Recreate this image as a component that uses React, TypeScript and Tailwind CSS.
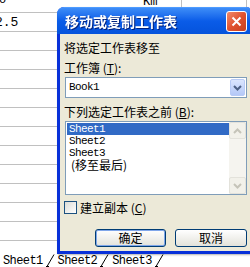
import React from 'react';

const cjk = { fontFamily: '"Noto Sans CJK SC", "Liberation Sans", sans-serif' };
const mono = { fontFamily: '"Liberation Mono", "Noto Sans CJK SC", monospace' };

// spreadsheet rows behind the dialog
function SheetGrid() {
  const rows = Array.from({ length: 12 });
  return (
    <div className="flex flex-col h-[255px] overflow-hidden">
      <div className="grid grid-cols-[182px_65px_1fr] h-[13px] border-b border-[#c0c0c0] overflow-hidden">
        <div className="border-r border-[#c0c0c0] relative overflow-hidden">
          <span className="absolute left-[-1px] top-[-6px] text-[12px] leading-[12px]" style={mono}>o</span>
          <span className="absolute left-[143px] top-[-4px] text-[12px] leading-[12px]" style={mono}>Km</span>
        </div>
        <div className="border-r border-[#c0c0c0]" />
        <div />
      </div>
      {rows.map((_, i) => (
        <div key={i} className="grid grid-cols-[182px_65px_1fr] h-[19px] shrink-0 border-b border-[#c0c0c0]">
          <div className="border-r border-[#c0c0c0] overflow-hidden">
            {i === 0 && (
              <span className="block ml-[-5px] mt-[3px] text-[13px] leading-[14px]" style={mono}>2.5</span>
            )}
          </div>
          <div className="border-r border-[#c0c0c0]" />
          <div />
        </div>
      ))}
    </div>
  );
}

function TabSlash() {
  return (
    <svg width="9" height="13" viewBox="0 0 9 13" className="shrink-0">
      <line x1="1" y1="12.5" x2="8" y2="0.5" stroke="#000" strokeWidth="1" />
      <line x1="0" y1="12.5" x2="3" y2="12.5" stroke="#000" strokeWidth="1" />
    </svg>
  );
}

function SheetTabs() {
  return (
    <div className="flex items-end h-[12px] pl-[3px] gap-[3px] text-[12px] leading-[12px] tracking-[-0.6px]" style={mono}>
      <span>Sheet1</span>
      <TabSlash />
      <span>Sheet2</span>
      <TabSlash />
      <span>Sheet3</span>
      <TabSlash />
    </div>
  );
}

function Chevron({ up, color }: { up?: boolean; color: string }) {
  return (
    <svg width="9" height="6" viewBox="0 0 9 6">
      <path d={up ? 'M1 5 L4.5 1.5 L8 5' : 'M1 1 L4.5 4.5 L8 1'} fill="none" stroke={color} strokeWidth="2" />
    </svg>
  );
}

function Label({ text, k }: { text: string; k: string }) {
  return (
    <div className="h-[12px] leading-[12px] text-[12px] pl-[4px] whitespace-nowrap" style={cjk}>
      {text} (<span className="underline">{k}</span>):
    </div>
  );
}

function Dialog() {
  return (
    <div className="absolute left-[57px] top-[7px] w-[196px] h-[247px] rounded-t-[7px] bg-[#0831d9] flex flex-col pb-[3px] px-[3px] shadow-[1px_1px_2px_rgba(0,0,0,0.3)]">
      {/* title bar */}
      <div className="h-[27px] -mx-[3px] rounded-t-[7px] bg-gradient-to-b from-[#3d8cf7] via-[#0a5ce8] to-[#0553dc] flex items-center pl-[8px] pr-[6px] border-t border-[#4d9bff]">
        <span className="text-white font-bold text-[14px] leading-[14px] whitespace-nowrap drop-shadow-[1px_1px_0_rgba(0,0,60,0.6)]" style={cjk}>
          移动或复制工作表
        </span>
        <div className="ml-auto w-[21px] h-[21px] rounded-[3px] border border-white bg-gradient-to-br from-[#f08a6a] via-[#e0522f] to-[#c8401f] flex items-center justify-center">
          <svg width="11" height="11" viewBox="0 0 11 11">
            <path d="M1.5 1.5 L9.5 9.5 M9.5 1.5 L1.5 9.5" stroke="#fff" strokeWidth="2" />
          </svg>
        </div>
      </div>

      {/* body */}
      <div className="flex-1 bg-[#ece9d8] flex flex-col pt-[8px] pr-[3px] text-black">
        <div className="h-[12px] leading-[12px] text-[12px] pl-[4px]" style={cjk}>将选定工作表移至</div>
        <div className="mt-[8px]">
          <Label text="工作簿" k="T" />
        </div>
        <div className="mt-[3px] ml-[5px] h-[21px] border border-[#7f9db9] bg-white flex items-center">
          <span className="pl-[3px] text-[11px] tracking-[-0.6px]" style={mono}>Book1</span>
          <div className="ml-auto mr-[1px] w-[15px] h-[17px] rounded-[2px] border border-[#b8cbf6] bg-gradient-to-b from-[#dbe6fe] to-[#b4c8f7] flex items-center justify-center">
            <Chevron color="#4d6185" />
          </div>
        </div>
        <div className="mt-[8px]">
          <Label text="下列选定工作表之前" k="B" />
        </div>
        <div className="mt-[3px] ml-[5px] h-[74px] border border-[#7f9db9] bg-white flex">
          <div className="flex-1 flex flex-col pt-[1px] pl-[1px] text-[11px] leading-[12px] tracking-[-0.6px]" style={mono}>
            <div className="h-[12px] bg-[#316ac5] text-white pl-[2px]">Sheet1</div>
            <div className="h-[12px] pl-[2px]">Sheet2</div>
            <div className="h-[12px] pl-[2px]">Sheet3</div>
            <div className="h-[12px] pl-[4px] tracking-normal text-[12px] leading-[12px] whitespace-nowrap" style={cjk}>(移至最后)</div>
          </div>
          <div className="w-[17px] bg-[#f5f4ef] flex flex-col justify-between">
            <div className="h-[17px] border border-[#e3e2db] bg-[#f2f1ea] rounded-[2px] flex items-center justify-center">
              <Chevron up color="#c5c4b9" />
            </div>
            <div className="h-[17px] border border-[#e3e2db] bg-[#f2f1ea] rounded-[2px] flex items-center justify-center">
              <Chevron color="#c5c4b9" />
            </div>
          </div>
        </div>
        <div className="mt-[6px] ml-[4px] flex items-center gap-[3px] h-[13px]">
          <div className="w-[13px] h-[13px] border border-[#1c5180] bg-gradient-to-br from-[#dcdcd7] to-white" />
          <span className="text-[12px] leading-[12px] whitespace-nowrap" style={cjk}>
            建立副本 (<span className="underline">C</span>)
          </span>
        </div>
        <div className="mt-[15px] flex justify-end gap-[9px]">
          <button className="w-[71px] h-[18px] rounded-[3px] border border-[#003c74] bg-gradient-to-b from-white to-[#e3e2da] shadow-[inset_0_0_0_1px_#7fa6ea] text-[12px] leading-[12px] flex items-center justify-center" style={cjk}>
            确定
          </button>
          <button className="w-[72px] h-[18px] rounded-[3px] border border-[#003c74] bg-gradient-to-b from-white to-[#e3e2da] text-[12px] leading-[12px] flex items-center justify-center" style={cjk}>
            取消
          </button>
        </div>
      </div>
    </div>
  );
}

export default function App() {
  return (
    <div className="relative w-[250px] h-[267px] overflow-hidden bg-white text-black">
      <SheetGrid />
      <SheetTabs />
      <Dialog />
    </div>
  );
}
